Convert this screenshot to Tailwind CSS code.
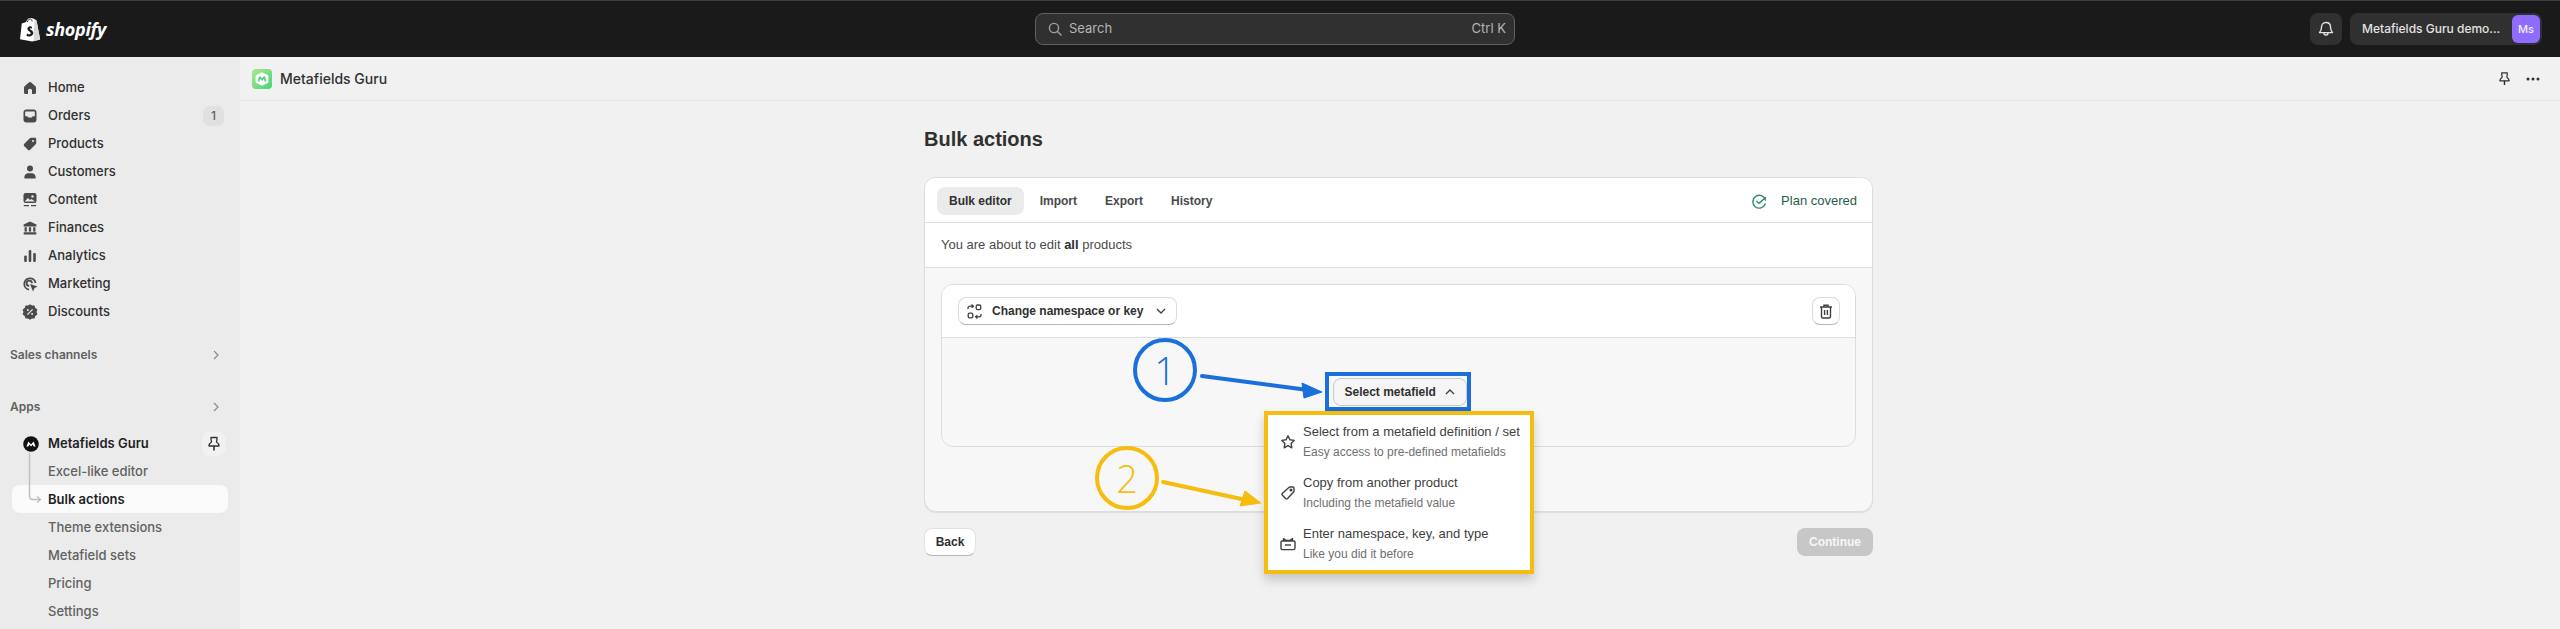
<!DOCTYPE html>
<html lang="en">
<head>
  <meta charset="UTF-8" />
  <title>Bulk actions</title>
  <script src="https://cdn.jsdelivr.net/npm/@tailwindcss/browser@4"></script>
</head>
<body class="bg-[#f1f1f1] text-[#303030] font-['Liberation_Sans',sans-serif] overflow-hidden">
  <div class="relative flex flex-col h-[629px] w-[2560px] overflow-hidden">

    <!-- top bar -->
    <header class="h-[57px] shrink-0 bg-[#1a1a1a] border-t border-[#3f3f3f] flex items-center pl-[20px] pr-[18px] font-['Inter',sans-serif]">
      <div class="w-[1015px] shrink-0 flex items-center gap-[5px] text-white">
        <svg width="21" height="25" viewBox="0 0 24 28"><path d="M2 7 L7 5.5 C8 2 10 .6 12 .8 L14 1 L17 2.4 L19 4 L23 25.5 L14 27.6 L0 25 Z" fill="#fff"/><path d="M16.5 3.4 L18.8 4 L23 25.5 L15.5 27.4 Z" fill="#d8d8d8"/><path d="M13.8 11 C11 9.6 8.6 10.8 8.5 13.2 C8.4 16.2 12.4 16.3 12.3 18.3 C12.2 19.7 10.2 20 8 18.5 L7.4 21 C10.6 23 14.9 21.9 15.2 18.1 C15.4 14.6 11.3 14.4 11.4 13 C11.5 12.1 12.7 12.1 13.4 13.3 Z" fill="#1a1a1a"/><path d="M8.4 5.6 C9 3.4 10 2 11.5 2 C13 2 13.8 3.4 13.8 4.8" fill="none" stroke="#1a1a1a" stroke-width="1"/></svg>
        <span class="font-['Open_Sans',sans-serif] font-bold italic text-[18px] tracking-[-0.3px] leading-none">shopify</span>
      </div>
      <div class="w-[480px] shrink-0 h-[32px] rounded-[8px] bg-[#303030] border border-[#616161] flex items-center pl-[12px] pr-[8px] text-[13px] text-[#b5b5b5]">
        <svg width="14" height="14" viewBox="0 0 14 14" fill="none" stroke="#a0a0a0" stroke-width="1.4"><circle cx="6" cy="6" r="4.6"/><path d="M9.5 9.5 L13 13" stroke-linecap="round"/></svg>
        <span class="ml-[7px]">Search</span>
        <span class="ml-auto">Ctrl K</span>
      </div>
      <div class="ml-auto flex items-center gap-[8px]">
        <button class="w-[32px] h-[32px] rounded-[8px] bg-[#303030] flex items-center justify-center">
          <svg width="16" height="16" viewBox="0 0 16 16" fill="none" stroke="#e3e3e3" stroke-width="1.4" stroke-linejoin="round"><path d="M8 1.5 C5 1.5 3.5 3.8 3.5 6.2 C3.5 9 2.8 10 1.5 11.6 H14.5 C13.2 10 12.5 9 12.5 6.2 C12.5 3.8 11 1.5 8 1.5 Z"/><path d="M6 12 C6 14.6 10 14.6 10 12"/></svg>
        </button>
        <div class="w-[192px] h-[32px] rounded-[8px] bg-[#303030] flex items-center justify-between pl-[12px] pr-[2px]">
          <span class="text-[12px] font-medium text-[#e3e3e3] whitespace-nowrap">Metafields Guru demo...</span>
          <span class="w-[28px] h-[28px] rounded-[6px] bg-[#8f6cff] text-[#f1edff] text-[11px] font-medium flex items-center justify-center">Ms</span>
        </div>
      </div>
    </header>

    <div class="flex flex-1 min-h-0">
      <!-- sidebar -->
      <aside class="w-[240px] shrink-0 bg-[#ebebeb] pt-[17px] pl-[12px] pr-[12px] font-['Inter',sans-serif] text-[13px] font-medium text-[#303030]">
        <nav class="flex flex-col">
          <a class="h-[28px] flex items-center pl-[11px] gap-[11px]">
            <svg width="14" height="14" viewBox="0 0 14 14" fill="#4a4a4a"><path d="M7 1 C7.6 1 8 1.2 8.5 1.7 L12.4 5.3 C12.8 5.7 13 6.2 13 6.8 V11.5 C13 12.4 12.4 13 11.5 13 H9 V9.5 C9 8.4 8.1 7.7 7 7.7 C5.9 7.7 5 8.4 5 9.5 V13 H2.5 C1.6 13 1 12.4 1 11.5 V6.8 C1 6.2 1.2 5.7 1.6 5.3 L5.5 1.7 C6 1.2 6.4 1 7 1 Z"/></svg>
            Home
          </a>
          <a class="h-[28px] flex items-center pl-[11px] gap-[11px]">
            <svg width="14" height="14" viewBox="0 0 14 14"><rect x="0.5" y="0.5" width="13" height="13" rx="3" fill="#4a4a4a"/><path d="M2.2 2.4 H11.8 V7.2 H9.6 L8.8 8.6 H5.2 L4.4 7.2 H2.2 Z" fill="#ebebeb"/></svg>
            Orders
            <span class="ml-auto mr-[4px] w-[21px] h-[20px] rounded-[7px] bg-[#e0e0e0] text-[12px] text-[#616161] flex items-center justify-center">1</span>
          </a>
          <a class="h-[28px] flex items-center pl-[11px] gap-[11px]">
            <svg width="14" height="14" viewBox="0 0 14 14" fill="#4a4a4a"><path d="M8 .8 H12 C12.7 .8 13.2 1.3 13.2 2 V6 C13.2 6.5 13 6.9 12.7 7.2 L7.2 12.7 C6.5 13.4 5.5 13.4 4.8 12.7 L1.3 9.2 C.6 8.5 .6 7.5 1.3 6.8 L6.8 1.3 C7.1 1 7.5 .8 8 .8 Z"/><circle cx="10" cy="4" r="1" fill="#ebebeb"/></svg>
            Products
          </a>
          <a class="h-[28px] flex items-center pl-[11px] gap-[11px]">
            <svg width="14" height="14" viewBox="0 0 14 14" fill="#4a4a4a"><circle cx="7" cy="3.6" r="3"/><path d="M1.5 13.4 C1 12.6 1.3 9.2 4.5 8.2 H9.5 C12.7 9.2 13 12.6 12.5 13.4 Z"/></svg>
            Customers
          </a>
          <a class="h-[28px] flex items-center pl-[11px] gap-[11px]">
            <svg width="14" height="14" viewBox="0 0 14 14"><rect x="0.5" y="0" width="13" height="10" rx="2.2" fill="#4a4a4a"/><path d="M2 8 L5 5 L7 7 L8.5 6 L12 8.4 H2 Z" fill="#ebebeb"/><circle cx="9.5" cy="3.4" r="1.2" fill="#ebebeb"/><path d="M.8 12.6 H6 M8 12.6 H13.2" stroke="#4a4a4a" stroke-width="1.4"/></svg>
            Content
          </a>
          <a class="h-[28px] flex items-center pl-[11px] gap-[11px]">
            <svg width="14" height="14" viewBox="0 0 14 14" fill="#4a4a4a"><path d="M7 .6 L13.4 3.4 V5.4 H.6 V3.4 Z"/><rect x="1.6" y="6.2" width="2.2" height="4.4"/><rect x="5.9" y="6.2" width="2.2" height="4.4"/><rect x="10.2" y="6.2" width="2.2" height="4.4"/><rect x=".6" y="11.2" width="12.8" height="2.2" rx=".6"/></svg>
            Finances
          </a>
          <a class="h-[28px] flex items-center pl-[11px] gap-[11px]">
            <svg width="14" height="14" viewBox="0 0 14 14" fill="#4a4a4a"><rect x="1.2" y="6.4" width="2.6" height="6.6" rx="1.1"/><rect x="5.7" y="1" width="2.6" height="12" rx="1.1"/><rect x="10.2" y="4" width="2.6" height="9" rx="1.1"/></svg>
            Analytics
          </a>
          <a class="h-[28px] flex items-center pl-[11px] gap-[10px]">
            <svg width="15" height="15" viewBox="0 0 15 15" fill="none" stroke="#4a4a4a" stroke-width="1.8"><path d="M6 12.6 A5.7 5.7 0 1 1 12.6 6"/><path d="M6.2 9 A2.7 2.7 0 1 1 9 6.2"/><path d="M7 7 L14.6 9.6 L11.6 11 L10 14.4 Z" fill="#4a4a4a" stroke="none"/></svg>
            Marketing
          </a>
          <a class="h-[28px] flex items-center pl-[10px] gap-[10px]">
            <svg width="16" height="16" viewBox="0 0 16 16"><path d="M8 .2 L10 1.6 L12.5 1.5 L13.3 3.9 L15.4 5.4 L14.6 8 L15.4 10.6 L13.3 12.1 L12.5 14.5 L10 14.4 L8 15.8 L6 14.4 L3.5 14.5 L2.7 12.1 L.6 10.6 L1.4 8 L.6 5.4 L2.7 3.9 L3.5 1.5 L6 1.6 Z" fill="#4a4a4a"/><path d="M5.4 10.6 L10.6 5.4" stroke="#ebebeb" stroke-width="1.3"/><circle cx="5.9" cy="6" r="1" fill="#ebebeb"/><circle cx="10.1" cy="10" r="1" fill="#ebebeb"/></svg>
            Discounts
          </a>
        </nav>

        <div class="mt-[15px] h-[28px] flex items-center justify-between -ml-[2px] pr-[8px] text-[12px] font-semibold text-[#616161]">
          Sales channels
          <svg width="8" height="10" viewBox="0 0 8 10" fill="none" stroke="#8a8a8a" stroke-width="1.2"><path d="M2 1 L6 5 L2 9"/></svg>
        </div>
        <div class="mt-[24px] h-[28px] flex items-center justify-between -ml-[2px] pr-[8px] text-[12px] font-semibold text-[#616161]">
          Apps
          <svg width="8" height="10" viewBox="0 0 8 10" fill="none" stroke="#8a8a8a" stroke-width="1.2"><path d="M2 1 L6 5 L2 9"/></svg>
        </div>

        <div class="relative mt-[9px] flex flex-col">
          <a class="h-[28px] flex items-center pl-[11px] gap-[11px] text-[#1f1f1f] font-semibold">
            <svg width="16" height="16" viewBox="0 0 16 16"><circle cx="8" cy="8" r="7.8" fill="#111"/><path d="M3.4 10.6 L5.4 5.6 L8 8.6 L10.6 5.6 L12.6 10.6 H10.6 L9.8 8.6 L8 10.6 L6.2 8.6 L5.4 10.6 Z" fill="#fff"/></svg>
            <span class="-ml-[2px]">Metafields Guru</span>
            <span class="ml-auto mr-[2px] w-[24px] h-[24px] rounded-[8px] bg-[#f1f1f1] flex items-center justify-center">
              <svg width="14" height="16" viewBox="0 0 14 16" fill="none" stroke="#303030" stroke-width="1.3" stroke-linejoin="round"><path d="M4 1.5 H10 V3 L9.5 6 C11 7 12 8.2 12 10 H2 C2 8.2 3 7 4.5 6 L4 3 Z"/><path d="M7 10 V14.5" stroke-width="1.6"/></svg>
            </span>
          </a>
          <a class="h-[28px] flex items-center pl-[36px] text-[#616161]">Excel-like editor</a>
          <a class="h-[28px] -mt-px mb-px pt-[2px] flex items-center pl-[36px] rounded-[8px] bg-[#fafafa] text-[#1f1f1f] font-semibold">Bulk actions</a>
          <a class="h-[28px] flex items-center pl-[36px] text-[#616161]">Theme extensions</a>
          <a class="h-[28px] flex items-center pl-[36px] text-[#616161]">Metafield sets</a>
          <a class="h-[28px] flex items-center pl-[36px] text-[#616161]">Pricing</a>
          <a class="h-[28px] flex items-center pl-[36px] text-[#616161]">Settings</a>
          <svg class="absolute left-[16px] top-[23px]" width="26" height="52" viewBox="0 0 26 52" fill="none" stroke="#bdbdbd" stroke-width="1.4"><path d="M1.5 0 V43 Q1.5 46.5 5 46.5 H12"/><path d="M9 43.5 L12.5 46.5 L9 49.5"/></svg>
        </div>
      </aside>

      <!-- main -->
      <main class="flex-1 min-w-0 flex flex-col">
        <div class="h-[44px] shrink-0 border-b border-[#e6e6e6] flex items-center pl-[12px] pr-[20px]">
          <span class="w-[20px] h-[20px] rounded-[4px] bg-linear-to-br from-[#a8e68f] to-[#3fd47a] flex items-center justify-center">
            <svg width="16" height="16" viewBox="0 0 16 16"><path d="M8 1.2 L13.6 4 C14.2 4.3 14.4 4.7 14.4 5.3 V10.7 C14.4 11.3 14.2 11.7 13.6 12 L8 14.8 L2.4 12 C1.8 11.7 1.6 11.3 1.6 10.7 V5.3 C1.6 4.7 1.8 4.3 2.4 4 Z" fill="#fff"/><path d="M4.4 10.6 L5.8 6 L8 8.8 L10.2 6 L11.6 10.6" fill="none" stroke="#4fd67a" stroke-width="1.7" stroke-linejoin="round"/></svg>
          </span>
          <span class="ml-[8px] text-[14px] font-['Inter',sans-serif] font-medium text-[#303030]">Metafields Guru</span>
          <svg class="ml-auto mr-[15px]" width="13" height="16" viewBox="0 0 14 16" fill="none" stroke="#303030" stroke-width="1.3" stroke-linejoin="round"><path d="M4 1.5 H10 V3 L9.5 6 C11 7 12 8.2 12 10 H2 C2 8.2 3 7 4.5 6 L4 3 Z"/><path d="M7 10 V14.5" stroke-width="1.6"/></svg>
          <svg width="14" height="4" viewBox="0 0 14 4" fill="#303030"><circle cx="2" cy="2" r="1.5"/><circle cx="7" cy="2" r="1.5"/><circle cx="12" cy="2" r="1.5"/></svg>
        </div>

        <div class="ml-[684px] w-[949px]">
          <h1 class="mt-[26px] h-[24px] leading-[24px] text-[20px] font-bold text-[#303030]">Bulk actions</h1>

          <section class="mt-[26px] h-[335px] rounded-[12px] border border-[#dcdcdc] bg-[#f7f7f7] overflow-hidden shadow-[0_1px_1px_rgba(0,0,0,0.08)]">
            <div class="h-[45px] pt-[2px] bg-white border-b border-[#dedede] flex items-center pl-[12px] pr-[15px] text-[12px] font-bold text-[#4a4a4a]">
              <span class="h-[28px] px-[12px] rounded-[8px] bg-[#ebebeb] text-[#303030] flex items-center">Bulk editor</span>
              <span class="ml-[16px]">Import</span>
              <span class="ml-[28px]">Export</span>
              <span class="ml-[28px]">History</span>
              <svg class="ml-auto mr-[14px]" width="15" height="15" viewBox="0 0 15 15" fill="none" stroke="#2f8a66" stroke-width="1.4" stroke-linecap="round"><path d="M13.4 6 A6.4 6.4 0 1 0 13.2 10"/><path d="M4.8 7.2 L7 9.4 L13.6 3.6"/></svg>
              <span class="text-[13px] font-normal text-[#1f5e4a]">Plan covered</span>
            </div>
            <div class="h-[45px] bg-white border-b border-[#dedede] flex items-center pl-[16px] text-[13px] text-[#4a4a4a]">
              <span>You are about to edit <b class="text-[#303030]">all</b> products</span>
            </div>
            <div class="mx-[16px] mt-[16px] h-[163px] rounded-[12px] border border-[#dcdcdc] bg-[#f7f7f7] overflow-hidden">
              <div class="h-[53px] bg-white border-b border-[#dedede] flex items-center justify-between pl-[16px] pr-[15px]">
                <button class="h-[28px] w-[219px] rounded-[8px] bg-white border border-[#dcdcdc] border-b-[#b5b5b5] flex items-center pl-[8px] text-[12px] font-bold text-[#303030] whitespace-nowrap">
                  <svg width="15" height="15" viewBox="0 0 15 15" fill="none" stroke="#404040" stroke-width="1.3"><path d="M1 5 V4 C1 2.8 2 2.2 3 2.2 H6.2 M4.6 .6 L6.4 2.2 L4.6 3.8"/><rect x="9.2" y="1" width="4.6" height="4.6" rx="1.4"/><rect x="1.2" y="9.2" width="4.6" height="4.6" rx="1.4"/><path d="M14 10 V11 C14 12.2 13 12.8 12 12.8 H8.8 M10.4 14.4 L8.6 12.8 L10.4 11.2"/></svg>
                  <span class="ml-[10px]">Change namespace or key</span>
                  <svg class="ml-[13px]" width="10" height="6" viewBox="0 0 10 6" fill="none" stroke="#404040" stroke-width="1.3"><path d="M1 1 L5 5 L9 1"/></svg>
                </button>
                <button class="w-[28px] h-[28px] rounded-[8px] bg-white border border-[#dcdcdc] border-b-[#b5b5b5] flex items-center justify-center">
                  <svg width="14" height="15" viewBox="0 0 14 15" fill="none" stroke="#404040" stroke-width="1.4"><path d="M1 3 H13 M5 3 V1.2 H9 V3"/><path d="M2.5 3 V12.5 C2.5 13.4 3.1 14 4 14 H10 C10.9 14 11.5 13.4 11.5 12.5 V3"/><path d="M5.6 6 V11 M8.4 6 V11"/></svg>
                </button>
              </div>
              <div class="h-[108px] flex justify-center pt-[40px] pl-[2px]">
                <button class="h-[28px] w-[134px] rounded-[8px] bg-[#f5f5f5] border border-[#c9c9c9] flex items-center pl-[11px] text-[12px] font-bold text-[#303030]">
                  Select metafield
                  <svg class="ml-[9px]" width="10" height="6" viewBox="0 0 10 6" fill="none" stroke="#404040" stroke-width="1.3"><path d="M1 5 L5 1 L9 5"/></svg>
                </button>
              </div>
            </div>
          </section>

          <div class="mt-[16px] flex justify-between">
            <button class="w-[52px] h-[28px] rounded-[8px] bg-white border border-[#e3e3e3] border-b-[#b5b5b5] text-[12px] font-bold text-[#303030]">Back</button>
            <button class="w-[76px] h-[28px] rounded-[8px] bg-[#c7c7c7] text-[12px] font-bold text-[#f7f7f7]">Continue</button>
          </div>
        </div>
      </main>
    </div>

    <!-- annotations and open menu -->
    <div class="absolute left-[1325px] top-[372px] w-[146px] h-[39px] border-[4px] border-[#1a6fdc]"></div>

    <div class="absolute left-[1264px] top-[411px] w-[270px] h-[163px] border-[4px] border-[#f5bd0f] bg-white shadow-[0_6px_10px_rgba(0,0,0,0.18)] pt-[1px]">
      <div class="h-[51px] flex items-center pl-[12px]">
        <svg width="16" height="16" viewBox="0 0 16 16" fill="none" stroke="#404040" stroke-width="1.4" stroke-linejoin="round"><path d="M8 1.8 L9.9 5.8 L14.2 6.4 L11.1 9.4 L11.8 13.8 L8 11.7 L4.2 13.8 L4.9 9.4 L1.8 6.4 L6.1 5.8 Z"/></svg>
        <div class="ml-[7px]">
          <p class="h-[20px] leading-[20px] text-[13px] text-[#404040] whitespace-nowrap">Select from a metafield definition / set</p>
          <p class="h-[20px] leading-[20px] text-[12px] text-[#707070] whitespace-nowrap">Easy access to pre-defined metafields</p>
        </div>
      </div>
      <div class="h-[51px] flex items-center pl-[12px]">
        <svg width="16" height="16" viewBox="0 0 16 16" fill="none" stroke="#404040" stroke-width="1.4" stroke-linejoin="round"><path d="M9.5 2 H13 C13.6 2 14 2.4 14 3 V6.5 L7.6 13.4 C7 14 6.2 14 5.6 13.4 L2.4 10.2 C1.8 9.6 1.8 8.8 2.4 8.2 Z"/><circle cx="11" cy="5" r=".8"/></svg>
        <div class="ml-[7px]">
          <p class="h-[20px] leading-[20px] text-[13px] text-[#404040] whitespace-nowrap">Copy from another product</p>
          <p class="h-[20px] leading-[20px] text-[12px] text-[#707070] whitespace-nowrap">Including the metafield value</p>
        </div>
      </div>
      <div class="h-[51px] flex items-center pl-[12px]">
        <svg width="16" height="16" viewBox="0 0 16 16" fill="none" stroke="#404040" stroke-width="1.4" stroke-linejoin="round"><path d="M2 5 H14 C14.6 5 15 5.4 15 6 V12 C15 13 14.4 13.6 13.4 13.6 H2.6 C1.6 13.6 1 13 1 12 V6 C1 5.4 1.4 5 2 5 Z"/><path d="M3.5 5 V2.6 L6 4.4 H10 L12.5 2.6 V5"/><path d="M5 9 H11"/></svg>
        <div class="ml-[7px]">
          <p class="h-[20px] leading-[20px] text-[13px] text-[#404040] whitespace-nowrap">Enter namespace, key, and type</p>
          <p class="h-[20px] leading-[20px] text-[12px] text-[#707070] whitespace-nowrap">Like you did it before</p>
        </div>
      </div>
    </div>

    <div class="absolute left-[1133px] top-[338px] w-[64px] h-[64px] rounded-full border-[4px] border-[#1a6fdc] text-[#1a6fdc] text-[38px] font-['Open_Sans',sans-serif] font-light flex items-center justify-center">1</div>
    <div class="absolute left-[1095px] top-[446px] w-[64px] h-[64px] rounded-full border-[4px] border-[#f5bd0f] text-[#f5bd0f] text-[38px] font-['Open_Sans',sans-serif] font-light flex items-center justify-center">2</div>
    <svg class="absolute left-0 top-0 pointer-events-none" width="2560" height="629" fill="none">
      <path d="M1202 376 L1308 390" stroke="#1a6fdc" stroke-width="4" stroke-linecap="round"/>
      <path d="M1322 392 L1302 383 L1304 398 Z" fill="#1a6fdc" stroke="#1a6fdc" stroke-width="1"/>
      <path d="M1163 482 L1246 500" stroke="#f5bd0f" stroke-width="4" stroke-linecap="round"/>
      <path d="M1261 503 L1245 491 L1240 506 Z" fill="#f5bd0f" stroke="#f5bd0f" stroke-width="1"/>
    </svg>
  </div>
</body>
</html>
